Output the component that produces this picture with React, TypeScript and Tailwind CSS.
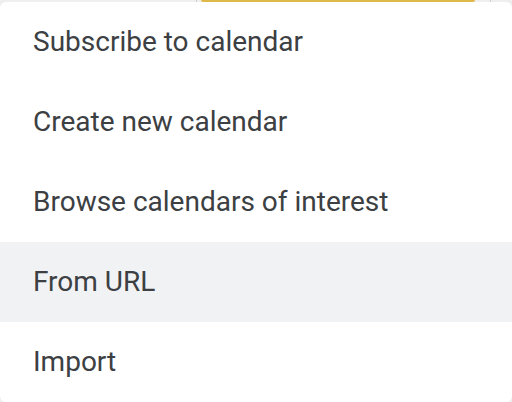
const items = [
  'Subscribe to calendar',
  'Create new calendar',
  'Browse calendars of interest',
  'From URL',
  'Import',
]

const ACTIVE = 'From URL'

export default function App() {
  return (
    <div className="w-[512px] h-[402px] bg-[#efefef] flex flex-col overflow-hidden">
      {/* strip of the toolbar peeking out above the menu */}
      <div className="h-[2px] flex shrink-0">
        <div className="w-[196px]" />
        <div className="w-px bg-[#cfcfcf]" />
        <div className="w-[4px]" />
        <div className="w-[274px] bg-[#dfb84a] rounded-b-full" />
        <div className="w-[15px]" />
        <div className="w-px bg-[#cfcfcf]" />
      </div>

      <ul
        className="flex-1 bg-white rounded-[6px] overflow-hidden"
        style={{ fontFamily: 'Roboto, "Noto Sans", sans-serif' }}
      >
        {items.map((label) => (
          <li
            key={label}
            className={
              label === ACTIVE
                ? 'h-20 flex items-center px-[33px] text-[28px] text-[#3c4043] bg-[#f1f2f4]'
                : 'h-20 flex items-center px-[33px] text-[28px] text-[#3c4043]'
            }
          >
            {label}
          </li>
        ))}
      </ul>
    </div>
  )
}
